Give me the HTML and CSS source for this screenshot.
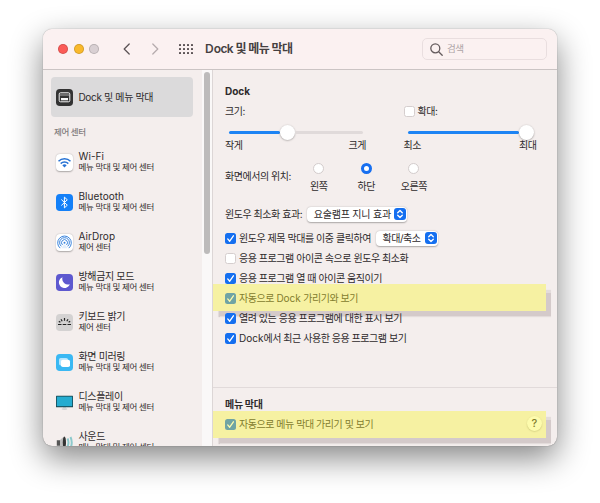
FILE: index.html
```html
<!DOCTYPE html>
<html lang="ko">
<head>
<meta charset="utf-8">
<title>Dock 및 메뉴 막대</title>
<link rel="stylesheet" href="styles.css">
</head>
<body>
<div class="window">
  <header class="toolbar">
    <div class="lights"><i class="light red"></i><i class="light amber"></i><i class="light gray"></i></div>
    <svg class="nav" width="36" height="14" viewBox="0 0 36 14" fill="none" stroke-width="1.3" stroke-linecap="round" stroke-linejoin="round"><path stroke="#5e5658" d="M6.2 2 1.2 7l5 5"/><path stroke="#b7adaf" d="m29.800 2 5 5-5 5"/></svg>
    <svg class="grid" width="14" height="10" viewBox="0 0 14 10" fill="#5e5658"><g id="dots"><rect x="0" y="0" width="2" height="2" rx=".5"/><rect x="4" y="0" width="2" height="2" rx=".5"/><rect x="8" y="0" width="2" height="2" rx=".5"/><rect x="12" y="0" width="2" height="2" rx=".5"/></g><use href="#dots" y="4"/><use href="#dots" y="8"/></svg>
    <h1>Dock 및 메뉴 막대</h1>
    <div class="search"><svg width="13" height="13" viewBox="0 0 13 13" fill="none" stroke="#645b5d" stroke-width="1.3" stroke-linecap="round"><circle cx="5.300" cy="5.300" r="4.500"/><path d="m8.700 8.700 3.500 3.500"/></svg><span>검색</span></div>
  </header>
  <div class="body">
    <aside>
      <nav class="list">
        <div class="item selected">
          <svg class="icon" viewBox="0 0 17 17"><rect width="17" height="17" rx="3.800" fill="#333"/><rect x="3.200" y="3.800" width="10.600" height="9" rx="1.300" fill="none" stroke="#f5f5f5"/><path d="M4 6h9" stroke="#ddd" stroke-width=".7"/><rect x="5" y="9" width="7" height="2.300" fill="#f5f5f5"/></svg>
          <b>Dock 및 메뉴 막대</b>
        </div>
        <div class="section">제어 센터</div>
        <div class="item">
          <svg class="icon white" viewBox="0 0 17 17"><g fill="none" stroke="#2873d4" stroke-width="1.500"><path d="M2.500 7.300a8.500 8.500 0 0 1 12 0M4.700 9.600a5.500 5.500 0 0 1 7.600 0"/></g><path d="M6.300 11.200q2.200-1.700 4.400 0l-2.200 2.200z" fill="#2873d4"/></svg>
          <p><b class="latin">Wi-Fi</b><small>메뉴 막대 및 제어 센터</small></p>
        </div>
        <div class="item">
          <svg class="icon" viewBox="0 0 17 17"><rect width="17" height="17" rx="3.800" fill="#1480f8"/><path d="m5.300 5.500 6 5.700-2.900 2.700V3.100l2.900 2.700-6 5.700" fill="none" stroke="#fff" stroke-width="1"/></svg>
          <p><b class="latin">Bluetooth</b><small>메뉴 막대 및 제어 센터</small></p>
        </div>
        <div class="item">
          <svg class="icon white" viewBox="0 0 17 17" fill="none" stroke="#3b84dc" stroke-width="1"><path d="M4.200 14.100a6.800 6.800 0 1 1 8.600 0M5.300 12.300a4.900 4.900 0 1 1 6.400 0M6.500 10.900a3 3 0 1 1 4 0"/><circle cx="8.500" cy="8.800" r="1" fill="#3b84dc" stroke="none"/><path d="m7.800 10.500-2.300 3.800h6l-2.300-3.800z" fill="#e3eefb" stroke="none"/></svg>
          <p><b class="latin">AirDrop</b><small>제어 센터</small></p>
        </div>
        <div class="item">
          <svg class="icon" viewBox="0 0 17 17"><rect width="17" height="17" rx="3.800" fill="#5d58cf"/><path d="M6.500 3.200a5.600 5.600 0 1 0 7.300 7.100A5.800 5.800 0 0 1 6.500 3.200z" fill="#fff"/></svg>
          <p><b>방해금지 모드</b><small>메뉴 막대 및 제어 센터</small></p>
        </div>
        <div class="item">
          <svg class="icon" viewBox="0 0 17 17"><rect width="17" height="17" rx="3.800" fill="#d4d2d2"/><g stroke="#222" stroke-width="1.200"><path d="M8.500 4v2.800M5 5.300l1.200 2M12 5.300l-1.200 2M2.800 7.400l1.600.8M14.200 7.400l-1.600.8M2 10.500h3.500M6.700 10.500h3.600M11.500 10.500H15"/></g></svg>
          <p><b>키보드 밝기</b><small>제어 센터</small></p>
        </div>
        <div class="item">
          <svg class="icon" viewBox="0 0 17 17"><rect width="17" height="17" rx="3.800" fill="#3ab8f3"/><rect x="3" y="4" width="9" height="7.500" rx="1.800" fill="#b5e6ff"/><rect x="5" y="5.800" width="9" height="7.200" rx="1.800" fill="#fff"/></svg>
          <p><b>화면 미러링</b><small>메뉴 막대 및 제어 센터</small></p>
        </div>
        <div class="item">
          <svg class="icon" viewBox="0 0 17 17"><ellipse cx="8.500" cy="15" rx="3" ry=".8" fill="#c6c8c9"/><path d="M7 13h3v2H7z" fill="#d6d8d9"/><rect x="0" y="1.700" width="17" height="11.600" rx=".5" fill="#174751"/><rect x=".8" y="2.600" width="15.400" height="9.600" fill="#25acd0"/></svg>
          <p><b>디스플레이</b><small>메뉴 막대 및 제어 센터</small></p>
        </div>
        <div class="item">
          <svg class="icon" viewBox="0 0 17 17"><path d="M.8 6.200h3.500v5.500H.8z" fill="#555"/><path d="M4 6 8 2.500v12L4 12z" fill="#bdbdbd"/><ellipse cx="8.400" cy="8.500" rx="1.600" ry="6" fill="#333"/><path d="M11.500 4.500q2 4 0 8M14.500 3q2.500 5.500 0 11" fill="none" stroke="#8cc9cc" stroke-width="2"/></svg>
          <p><b>사운드</b><small>메뉴 막대 및 제어 센터</small></p>
        </div>
      </nav>
      <div class="track"><div class="thumb"></div></div>
    </aside>
    <main>
      <h2>Dock</h2>
      <div class="sliders">
        <section>
          <div class="label">크기:</div>
          <div class="slider"><i class="fill"></i><i class="knob"></i><i class="rest"></i></div>
          <div class="ends"><span>작게</span><span>크게</span></div>
        </section>
        <section class="zoom">
          <div class="label"><i class="box"></i>확대:</div>
          <div class="slider"><i class="fill full"></i><i class="knob"></i></div>
          <div class="ends"><span>최소</span><span>최대</span></div>
        </section>
      </div>
      <div class="position">
        <span>화면에서의 위치:</span>
        <div class="radio"><i></i>왼쪽</div>
        <div class="radio on"><i></i>하단</div>
        <div class="radio"><i></i>오른쪽</div>
      </div>
      <div class="row effect"><span>윈도우 최소화 효과:</span><div class="select">요술램프 지니 효과<svg viewBox="0 0 12 12"><rect width="12" height="12" rx="3"/><path d="m3.700 4.800 2.300-2.300 2.300 2.300M3.700 7.200 6 9.500l2.300-2.300"/></svg></div></div>
      <div class="row double"><svg class="check" viewBox="0 0 11 11"><rect width="11" height="11" rx="2.500"/><path d="m2.700 5.900 2 2.300 3.700-5.400"/></svg><span>윈도우 제목 막대를 이중 클릭하여</span><div class="select short">확대/축소<svg viewBox="0 0 12 12"><rect width="12" height="12" rx="3"/><path d="m3.700 4.800 2.300-2.300 2.300 2.300M3.700 7.200 6 9.500l2.300-2.300"/></svg></div></div>
      <div class="row"><i class="box"></i><span>응용 프로그램 아이콘 속으로 윈도우 최소화</span></div>
      <div class="row"><svg class="check" viewBox="0 0 11 11"><rect width="11" height="11" rx="2.500"/><path d="m2.700 5.900 2 2.300 3.700-5.400"/></svg><span>응용 프로그램 열 때 아이콘 움직이기</span></div>
      <div class="row marked"><svg class="check" viewBox="0 0 11 11"><rect width="11" height="11" rx="2.500"/><path d="m2.700 5.900 2 2.300 3.700-5.400"/></svg><span>자동으로 <em>Dock</em> 가리기와 보기</span></div>
      <div class="row"><svg class="check" viewBox="0 0 11 11"><rect width="11" height="11" rx="2.500"/><path d="m2.700 5.900 2 2.300 3.700-5.400"/></svg><span>열려 있는 응용 프로그램에 대한 표시 보기</span></div>
      <div class="row"><svg class="check" viewBox="0 0 11 11"><rect width="11" height="11" rx="2.500"/><path d="m2.700 5.900 2 2.300 3.700-5.400"/></svg><span><em>Dock</em>에서 최근 사용한 응용 프로그램 보기</span></div>
      <hr>
      <h2 class="menubar">메뉴 막대</h2>
      <div class="row marked last"><svg class="check" viewBox="0 0 11 11"><rect width="11" height="11" rx="2.500"/><path d="m2.700 5.900 2 2.300 3.700-5.400"/></svg><span>자동으로 메뉴 막대 가리기 및 보기</span><div class="help">?</div></div>
    </main>
  </div>
</div>
</body>
</html>
```
FILE: styles.css
```css
* { box-sizing: border-box; }
body {
  margin: 0;
  height: 503px;
  overflow: hidden;
  padding: 29px 43px 0;
  background: #fff;
  color: #2e2a2b;
  font: 10px/12px Inter, "Noto Sans CJK KR", sans-serif;
  white-space: nowrap;
}
.window {
  width: 514px;
  height: 417px;
  border-radius: 9px;
  overflow: hidden;
  background: #f4eeed;
  box-shadow: 0 0 1px rgba(0,0,0,.55), 0 12px 32px rgba(0,0,0,.48);
}
.toolbar {
  height: 41px;
  display: flex;
  align-items: center;
  padding: 0 10px 0 15px;
  background: #fbf1f1;
  border-bottom: 1px solid #cbc4c4;
}
.lights { display: flex; gap: 5.500px; margin-right: 24px; }
.light { width: 10px; height: 10px; border-radius: 50%; border: .5px solid rgba(0,0,0,.15); }
.red { background: #fb5b57; }
.amber { background: #f9b92c; }
.gray { background: #d9d0d3; }
.grid { margin: 0 12px 0 20px; }
h1 { margin: 0; font-size: 12px; font-weight: 600; letter-spacing: -.6px; color: #454041; }
h1::first-letter { letter-spacing: 0; }
.search {
  margin-left: auto;
  width: 125px;
  height: 22px;
  display: flex;
  align-items: center;
  gap: 4px;
  padding-left: 7px;
  border: 1px solid #e9dedf;
  border-radius: 5px;
  color: #ada4a6;
  font-size: 9.500px;
  letter-spacing: -.5px;
}
.body { display: flex; height: 376px; }
aside { width: 170px; display: flex; border-right: 1px solid #dcd6d6; }
.list { width: 159px; height: 376px; overflow: hidden; padding: 7px 9px 0 8px; }
.item { height: 40px; display: flex; align-items: center; gap: 5.500px; padding-left: 5px; flex: none; }
.selected { border-radius: 4px; background: #dbdadb; }
.icon { width: 17px; height: 17px; flex: none; }
.white { background: #fff; border-radius: 4px; box-shadow: 0 .5px 1.500px rgba(0,0,0,.3); }
.item p { margin: 0; padding-bottom: 2px; }
.item b { display: block; font-weight: 400; font-size: 10px; line-height: 12px; letter-spacing: -.35px; }
.item .latin { letter-spacing: .05px; }
.item small { display: block; font-size: 8.500px; line-height: 10px; letter-spacing: -.35px; }
.section { height: 25px; padding: 9px 0 0 3px; font-size: 8.500px; line-height: 12px; color: #817b7c; font-weight: 500; letter-spacing: -.35px; }
.track { width: 10px; padding: 2px 1.500px 0 2px; background: #faf8f8; }
.thumb { width: 6px; height: 182px; border-radius: 3px; background: #bdbbbb; }
main { flex: 1; padding: 15px 0 0 12px; letter-spacing: -.45px; }
h2 { margin: 0; font-size: 10px; line-height: 12px; font-weight: 700; letter-spacing: 0; }
.menubar { letter-spacing: -.3px; }
.sliders { display: flex; gap: 36px; margin-top: 8px; }
.sliders section { width: 143px; }
.sliders .zoom { width: 133px; margin-left: -.5px; }
.label { height: 12px; display: flex; align-items: center; gap: 3px; }
.slider { height: 16px; margin: 7px 0 0 4px; display: flex; align-items: center; }
.fill { width: 51px; height: 3px; border-radius: 2px; background: #1d84f4; }
.full { width: 111px; }
.rest { width: 68px; height: 3px; border-radius: 2px; background: #e0dada; }
.knob { width: 15px; height: 15px; border-radius: 50%; background: #fff; box-shadow: 0 .5px 2px rgba(0,0,0,.35); }
.ends { height: 12px; display: flex; justify-content: space-between; margin-top: -1px; }
.sliders section:first-child .ends { padding-right: 2px; }
.position { height: 30px; display: flex; margin-top: 12px; }
.position > span { width: 70px; margin-top: 7px; }
.radio { width: 47.500px; display: flex; flex-direction: column; align-items: center; gap: 6px; }
.radio i { width: 11px; height: 11px; border-radius: 50%; background: #fff; border: 1px solid #d3cccc; }
.radio.on i { border: 3px solid #176ff0; }
.row { height: 20px; display: flex; align-items: center; gap: 3px; position: relative; }
.effect { height: 24px; margin-top: 9px; gap: 5px; }
.double { margin-top: 2px; }
.select { width: 100px; height: 15px; padding: 0 1px 0 6.500px; display: flex; align-items: center; justify-content: space-between; background: #fff; border-radius: 4px; box-shadow: 0 .5px 1.500px rgba(0,0,0,.3); letter-spacing: -.2px; }
.short { width: 62px; margin-left: 2px; letter-spacing: -.45px; }
.select svg { width: 12px; height: 12px; }
.select rect, .check rect { fill: #146ff0; }
.select path, .check path { fill: none; stroke: #fff; stroke-width: 1.300; stroke-linecap: round; stroke-linejoin: round; }
.check { width: 11px; height: 11px; flex: none; }
.box { width: 11px; height: 11px; flex: none; background: #fff; border: 1px solid #d5cece; border-radius: 2.500px; }
em { font-style: normal; letter-spacing: 0; }
hr { margin: 39px 0 10px -12px; border: 0; height: 1px; background: #e1dada; }
.marked::after {
  content: "";
  position: absolute;
  left: -12px;
  top: -4px;
  width: 333px;
  height: 27px;
  background: rgba(249,244,50,.4);
  box-shadow: 4.500px 6px 1px rgba(120,100,105,.26);
}
.last { margin-top: 4px; }
.last::after { top: -3.500px; }
.help { width: 15px; height: 15px; margin: -2px 15px 0 auto; border-radius: 50%; background: #fff; box-shadow: 0 .5px 1.500px rgba(0,0,0,.3); text-align: center; font-size: 11px; line-height: 15px; font-weight: 500; letter-spacing: 0; }
```
